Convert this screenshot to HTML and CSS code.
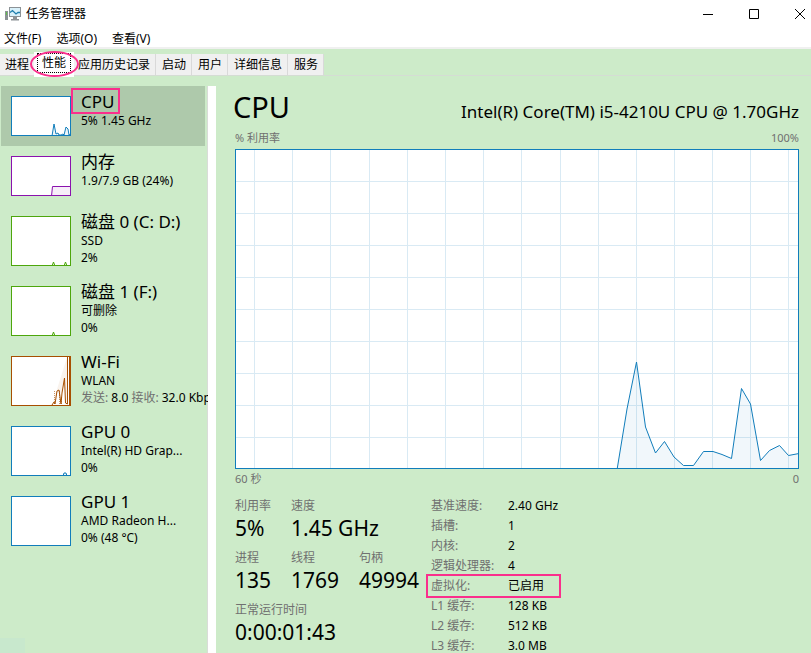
FILE: index.html
```html
<!DOCTYPE html>
<html lang="zh-CN">
<head>
  <meta charset="UTF-8" />
  <meta name="viewport" content="width=device-width, initial-scale=1" />
  <title>任务管理器</title>
  <link rel="stylesheet" href="styles.css">
</head>
<body>
  <header class="titlebar">
    <svg class="app-icon" viewBox="0 0 16 14" aria-hidden="true">
      <rect x="0" y="4" width="3" height="9" fill="#8c9296" />
      <rect x="1" y="5" width="1" height="3" fill="#5fc24a" />
      <rect x="4.500" y="0.500" width="11" height="9" fill="#d9f1fb" stroke="#8c9296" />
      <path d="M5 5.500L7.500 3.500L11 7L13 5.500H15" fill="none" stroke="#1f7fae" stroke-width="1.300" />
      <path d="M8 10h4v2h2v1.500H6V12h2z" fill="#8c9296" />
    </svg>
    <h1>任务管理器</h1>
    <div class="window-buttons">
      <button type="button" aria-label="最小化"><svg viewBox="0 0 10 10"><path d="M0 5.500H10" /></svg></button>
      <button type="button" aria-label="最大化"><svg viewBox="0 0 10 10"><path d="M0.500 0.500H9.500V9.500H0.500Z" /></svg></button>
      <button type="button" aria-label="关闭"><svg viewBox="0 0 10 10"><path d="M0 0L10 10M10 0L0 10" /></svg></button>
    </div>
  </header>

  <nav class="menu">
    <button type="button">文件(F)</button>
    <button type="button">选项(O)</button>
    <button type="button">查看(V)</button>
  </nav>

  <div class="tabs" role="tablist">
    <button type="button" role="tab">进程</button>
    <button type="button" role="tab" class="active" aria-selected="true"><span>性能</span></button>
    <button type="button" role="tab">应用历史记录</button>
    <button type="button" role="tab">启动</button>
    <button type="button" role="tab">用户</button>
    <button type="button" role="tab">详细信息</button>
    <button type="button" role="tab">服务</button>
  </div>

  <main class="content">
    <aside class="sidebar">
      <button type="button" class="item selected">
        <svg class="thumb short blue" viewBox="1 1 58 38"><path d="M41 40L43 28L45 38L47 37L48 39H50L52 38L53 39L55 31L57 33L58 39L60 38V40" /></svg>
        <span class="info"><span class="name"><span class="mark">CPU</span></span><span>5% 1.45 GHz</span></span>
      </button>
      <button type="button" class="item">
        <svg class="thumb short purple" viewBox="1 1 58 38"><path d="M40.500 40L41.500 30.500H60V40" /></svg>
        <span class="info"><span class="name">内存</span><span>1.9/7.9 GB (24%)</span></span>
      </button>
      <button type="button" class="item">
        <svg class="thumb green" viewBox="1 1 58 48"><path d="M41 50L42.500 46L44 50M53 50L54.500 46L56 50" /></svg>
        <span class="info"><span class="name">磁盘 0 (C: D:)</span><span>SSD</span><span>2%</span></span>
      </button>
      <button type="button" class="item">
        <svg class="thumb green" viewBox="1 1 58 48"><path d="M41 50L42.500 46L44 50" /></svg>
        <span class="info"><span class="name">磁盘 1 (F:)</span><span>可删除</span><span>0%</span></span>
      </button>
      <button type="button" class="item">
        <svg class="thumb brown" viewBox="1 1 58 48">
          <path class="dotted" d="M43.500 50V34M48.500 50V35M50.500 50V40M56.500 50V30" />
          <path d="M41 49L43 46L44 48L46 35L48 34L50 48L51 37L53.500 22L54.500 47L56.500 48V0M58.500 0V50" />
        </svg>
        <span class="info"><span class="name">Wi-Fi</span><span>WLAN</span><span><i>发送:</i> 8.0 <i>接收:</i> 32.0 Kbps</span></span>
      </button>
      <button type="button" class="item">
        <svg class="thumb blue" viewBox="1 1 58 48"><path d="M52 50L53 47L55 47L56 50" /></svg>
        <span class="info"><span class="name">GPU 0</span><span>Intel(R) HD Grap...</span><span>0%</span></span>
      </button>
      <button type="button" class="item">
        <svg class="thumb blue" viewBox="1 1 58 48"></svg>
        <span class="info"><span class="name">GPU 1</span><span>AMD Radeon H...</span><span>0% (48 °C)</span></span>
      </button>
    </aside>

    <section class="details">
      <div class="heading">
        <h2>CPU</h2>
        <p>Intel(R) Core(TM) i5-4210U CPU @ 1.70GHz</p>
      </div>
      <div class="axis"><span>% 利用率</span><span>100%</span></div>
      <svg class="chart" viewBox="0 0 562 318" preserveAspectRatio="none" role="img" aria-label="CPU 利用率">
        <path class="grid" d="M18.500 0V318M56.500 0V318M94.500 0V318M133.500 0V318M171.500 0V318M209.500 0V318M247.500 0V318M285.500 0V318M324.500 0V318M362.500 0V318M400.500 0V318M438.500 0V318M476.500 0V318M514.500 0V318M552.500 0V318" />
        <path class="grid" d="M0 31.500H562M0 63.500H562M0 95.500H562M0 127.500H562M0 159.500H562M0 191.500H562M0 223.500H562M0 255.500H562M0 287.500H562" />
        <path class="usage" d="M381 320L391 259L400.500 212L409.500 277L419.500 303L428.500 291.500L438 307L447.500 315.500H457.500L467.500 301.500H477L486 304.500L495.500 308.500L505.500 238.500L514.500 254L524.500 310.500L533.500 300.500L543.500 295.500L552.500 305.500L563 303.500V320" />
      </svg>
      <div class="axis bottom"><span>60 秒</span><span>0</span></div>

      <div class="stats">
        <dl class="live">
          <div><dt>利用率</dt><dd>5%</dd></div>
          <div class="wide"><dt>速度</dt><dd>1.45 GHz</dd></div>
          <div><dt>进程</dt><dd>135</dd></div>
          <div><dt>线程</dt><dd>1769</dd></div>
          <div><dt>句柄</dt><dd>49994</dd></div>
          <div class="full"><dt>正常运行时间</dt><dd>0:00:01:43</dd></div>
        </dl>
        <dl class="specs">
          <div><dt>基准速度:</dt><dd>2.40 GHz</dd></div>
          <div><dt>插槽:</dt><dd>1</dd></div>
          <div><dt>内核:</dt><dd>2</dd></div>
          <div><dt>逻辑处理器:</dt><dd>4</dd></div>
          <div class="marked"><dt>虚拟化:</dt><dd>已启用</dd></div>
          <div><dt>L1 缓存:</dt><dd>128 KB</dd></div>
          <div><dt>L2 缓存:</dt><dd>512 KB</dd></div>
          <div><dt>L3 缓存:</dt><dd>3.0 MB</dd></div>
        </dl>
      </div>
    </section>
  </main>
</body>
</html>
```
FILE: styles.css
```css
/* Reset & base */
* {
  box-sizing: border-box;
}
body {
  margin: 0;
  height: 100vh;
  display: flex;
  flex-direction: column;
  overflow: hidden;
  background: #cdebc9;
  color: #000;
  font-family: "Noto Sans", "Noto Sans CJK SC", sans-serif;
  font-size: 12px;
  line-height: 18px;
}
h1, h2, p, dl, dd {
  margin: 0;
  font-weight: 400;
}
button {
  border: none;
  padding: 0;
  background: none;
  color: inherit;
  font: inherit;
}
i {
  font-style: normal;
  color: #707070;
}

/* Title bar */
.titlebar {
  display: flex;
  align-items: center;
  height: 28px;
  flex-shrink: 0;
  padding-left: 5px;
  background: #fff;
}
.app-icon {
  width: 16px;
  height: 14px;
  margin-right: 5px;
}
.titlebar h1 {
  font-size: 12px;
}
.window-buttons {
  display: flex;
  margin-left: auto;
}
.window-buttons button {
  display: flex;
  justify-content: flex-end;
  width: 46px;
  padding-right: 6px;
}
.window-buttons svg {
  width: 10px;
  height: 10px;
  fill: none;
  stroke: #000;
}

/* Menu */
.menu {
  display: flex;
  gap: 15px;
  height: 21px;
  flex-shrink: 0;
  padding: 2px 0 0 4px;
  background: #fff;
  border-bottom: 2px solid #f0f0f0;
}

/* Tabs */
.tabs {
  display: flex;
  align-items: flex-end;
  height: 27px;
  flex-shrink: 0;
  border-bottom: 1px solid #d5dcd4;
}
.tabs button {
  height: 21px;
  padding: 0 5px 0 6px;
  background: #f0f0f0;
  border-right: 1px solid #d9d9d9;
}
.tabs button:first-child {
  padding-left: 5px;
}
.tabs .active {
  position: relative;
  height: 25px;
  margin: 0 -2px -2px -1px;
  padding: 0 3px 4px;
  background: #fff;
  border: none;
}
.tabs .active span {
  display: block;
  padding: 0 4px;
  border: 1px dotted #000;
}
.tabs .active::after {
  content: "";
  position: absolute;
  inset: -1px -5px 0 -4px;
  border: 2px solid #fa2f8c;
  border-radius: 50%;
}

/* Sidebar */
.content {
  display: flex;
  flex: 1;
  min-height: 0;
  padding-top: 10px;
}
.sidebar {
  display: flex;
  flex-direction: column;
  gap: 10px;
  width: 216px;
  flex-shrink: 0;
  border-right: 8px solid #fff;
  box-shadow: inset -1px 0 #d9dcd8;
  overflow: hidden;
}
.sidebar::after {
  content: "";
  width: 25px;
  height: 15px;
  margin-top: auto;
  background: #c8e8cd;
}
.item {
  display: flex;
  align-items: flex-start;
  gap: 10px;
  margin: 0 3px 0 1px;
  padding: 10px 0 0 10px;
  text-align: left;
  white-space: nowrap;
}
.selected {
  padding-bottom: 10px;
  margin-bottom: -10px;
  background: #aec9ab;
}
.thumb {
  width: 60px;
  height: 50px;
  flex-shrink: 0;
  background: #fff;
  border: 1px solid;
}
.short {
  height: 40px;
}
.thumb path {
  fill: currentColor;
  fill-opacity: 0.07;
  stroke: currentColor;
}
.thumb .dotted {
  stroke-dasharray: 1 1;
  opacity: 0.6;
}
.blue {
  color: #117dbb;
}
.purple {
  color: #8b12ae;
}
.green {
  color: #4da60c;
}
.brown {
  color: #a74f01;
}
.info {
  display: flex;
  flex-direction: column;
  line-height: 17px;
}
.name {
  font-size: 17px;
  line-height: 12px;
  padding-bottom: 4px;
}
.mark {
  position: relative;
}
.mark::after {
  content: "";
  position: absolute;
  inset: -2px -6px -1px -10px;
  border: 2px solid #fa2f8c;
}

/* Details */
.details {
  flex: 1;
  min-width: 0;
  padding: 0 12px 0 19px;
}
.heading {
  display: flex;
  justify-content: space-between;
  align-items: baseline;
  height: 43px;
  margin-left: -2px;
}
.heading h2 {
  font-size: 29px;
  line-height: 42px;
}
.heading p {
  font-size: 17px;
}
.axis {
  display: flex;
  justify-content: space-between;
  height: 20px;
  color: #707070;
  font-size: 11px;
}
.bottom {
  line-height: 20px;
}
.chart {
  display: block;
  width: 100%;
  height: 320px;
  background: #fff;
  border: 1px solid #117dbb;
}
.grid {
  fill: none;
  stroke: #d9eaf4;
}
.usage {
  fill: #117dbb;
  fill-opacity: 0.06;
  stroke: #117dbb;
}

/* Stats */
.stats {
  display: flex;
  gap: 12px;
  padding-top: 8px;
}
dt {
  color: #707070;
}
.live {
  display: grid;
  grid-template-columns: 56px 68px 60px;
  align-content: start;
}
.live div {
  height: 52px;
}
.live .wide {
  grid-column: span 2;
}
.live .full {
  grid-column: span 3;
}
.live dd {
  font-size: 21px;
  line-height: 26px;
}
.specs div {
  display: flex;
  height: 20px;
}
.specs dt {
  width: 77px;
}
.marked {
  position: relative;
}
.marked::after {
  content: "";
  position: absolute;
  inset: -3px -3px -1px -5px;
  border: 2px solid #fa2f8c;
}
```
